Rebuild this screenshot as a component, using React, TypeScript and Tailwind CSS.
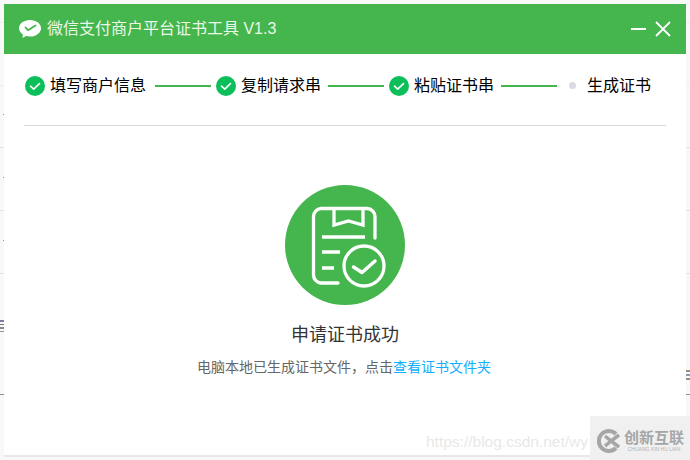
const cjk = "font-['Liberation_Sans','Noto_Sans_CJK_SC',sans-serif]";

function StepCheck() {
  return (
    <svg width="20" height="20" viewBox="0 0 20 20" className="shrink-0">
      <circle cx="10" cy="10" r="10" fill="#0dbf5b" />
      <path d="M5.5 10.2l3.2 3 5.8-5.6" fill="none" stroke="#fff" strokeWidth="1.6" strokeLinecap="round" strokeLinejoin="round" />
    </svg>
  );
}

function WeChatLogo() {
  return (
    <svg width="22" height="19" viewBox="0 0 22 19" className="shrink-0">
      <path d="M11 0C5 0 0 3.6 0 8.2c0 2.6 1.6 4.8 4 6.3L3.4 18l3.6-2c1.3.3 2.6.5 4 .5 6 0 11-3.7 11-8.3S17 0 11 0z" fill="#fff" />
      <path d="M6.5 7.5l2.5 2.7 7.5-4.7" fill="none" stroke="#45b54d" strokeWidth="1.8" strokeLinecap="round" strokeLinejoin="round" />
    </svg>
  );
}

function SuccessBadge() {
  return (
    <div className="w-[120px] h-[120px] rounded-full bg-[#45b54d] mt-[59px]">
      <svg width="120" height="120" viewBox="0 0 120 120" fill="none" stroke="#fff" strokeWidth="3.3" strokeLinecap="round">
        <path d="M90 53V32a8 8 0 0 0-8-8.500H36a8 8 0 0 0-7.500 8V90a8 8 0 0 0 7.500 8H53" />
        <path d="M49 24v16l14.500-4 14.500 4V24" strokeLinecap="butt" />
        <path d="M37 52h43M37 67h18M37 83h12" strokeLinecap="butt" />
        <circle cx="79" cy="81" r="20" />
        <path d="M68.500 82l8.500 5.500 13-11.500" strokeWidth="3.500" strokeLinejoin="round" />
      </svg>
    </div>
  );
}

function Watermark() {
  return (
    <div className="absolute right-0 bottom-0 w-[100px] h-[44px] bg-[#f0f0f0] flex items-center pl-[7px] gap-[4px]">
      <svg width="23" height="24" viewBox="0 0 23 24" fill="none" className="shrink-0 mt-[6px]">
        <path d="M19 5A10 10 0 1 0 19 19" stroke="#a6a6a6" strokeWidth="4" />
        <path d="M8 7l6 5-6 5M22 6l-8 6 8 6" stroke="#a6a6a6" strokeWidth="3.500" />
      </svg>
      <div className="flex flex-col items-center mt-[6px]">
        <span className={`${cjk} text-[15px] leading-[16px] font-bold text-[#a6a6a6]`}>创新互联</span>
        <span className="font-['Liberation_Sans',sans-serif] text-[5px] leading-[6px] whitespace-nowrap text-[#b0b0b0]">CHUANG XIN HU LIAN</span>
      </div>
    </div>
  );
}

const steps = ["填写商户信息", "复制请求串", "粘贴证书串"];

// rows of the page that sits behind the dialog, only their ends stick out
const backdropRows = [147, 210, 273];

export default function App() {
  return (
    <div className={`relative w-[690px] h-[460px] overflow-hidden bg-[#f8f8f8] p-[4px] pb-[3px] ${cjk}`}>
      {backdropRows.map((y) => (
        <div key={y} className="absolute left-0 right-0 h-[1px] bg-[#e4e4e4]" style={{ top: y }} />
      ))}
      <div className="absolute left-0 right-0 top-[22px] h-[1px] bg-[#eeeeee]" />
      <div className="absolute left-0 right-0 top-[85px] h-[1px] bg-[#eeeeee]" />
      <div className="absolute left-0 right-0 top-[394px] h-[1px] bg-[#8f8f8f]" />
      <div className="absolute left-[3px] top-[114px] w-[1px] h-[1px] bg-[#c08a50]" />
      <div className="absolute left-[3px] top-[177px] w-[1px] h-[1px] bg-[#c08a50]" />
      <div className="absolute left-[3px] top-[240px] w-[1px] h-[1px] bg-[#c08a50]" />
      <div className="absolute left-0 top-[320px] flex w-[4px] flex-col gap-[2px]">
        <div className="h-[2px] bg-[#7a7f99]" />
        <div className="h-[1px] bg-[#777]" />
        <div className="h-[2px] bg-[#8a8a8a]" />
        <div className="h-[1px] bg-[#999]" />
      </div>
      <div className="absolute right-0 top-[370px] flex w-[4px] flex-col gap-[2px]">
        <div className="h-[2px] bg-[#9a8f88]" />
        <div className="h-[2px] bg-[#8a9ab0]" />
        <div className="h-[2px] bg-[#9a8f88]" />
      </div>

      <div className="relative h-full bg-white flex flex-col border-b-2 border-[#e8e8e8]">
        <header className="h-[50px] shrink-0 bg-[#45b54d] flex items-center pl-[15px] pr-[15px] text-white">
          <WeChatLogo />
          <span className="ml-[6px] text-[16px] text-[#eaf7e6]">微信支付商户平台证书工具 V1.3</span>
          <div className="ml-auto flex items-center gap-[9px]">
            <div className="w-[15px] h-[2px] bg-white" />
            <svg width="16" height="16" viewBox="0 0 16 16" stroke="#fff" strokeWidth="1.8">
              <path d="M1 1l14 14M15 1L1 15" />
            </svg>
          </div>
        </header>

        <div className="mx-[20px] h-[72px] shrink-0 border-b border-[#d9d9d9] flex items-center pl-[1px] pb-[8px] text-[16px] text-black">
          {steps.map((label, i) => (
            <div key={label} className="flex items-center">
              <StepCheck />
              <span className={`whitespace-nowrap ${i === 0 ? "ml-[5px]" : "ml-[5px]"}`}>{label}</span>
              <div className={`h-[2px] w-[56px] bg-[#45b54d] mr-[5px] ${i === 0 ? "ml-[9px]" : "ml-[7px]"}`} />
            </div>
          ))}
          <div className="w-[7px] h-[7px] rounded-full bg-[#d8dae6] ml-[7px]" />
          <span className="ml-[11px] whitespace-nowrap">生成证书</span>
        </div>

        <main className="flex-1 flex flex-col items-center">
          <SuccessBadge />
          <h1 className="mt-[19px] text-[18px] leading-[22px] text-[#333]">申请证书成功</h1>
          <p className="mt-[11px] mr-[2px] text-[14px] leading-[20px] text-[#666]">
            电脑本地已生成证书文件，点击<a className="text-[#10aeff]">查看证书文件夹</a>
          </p>
        </main>
      </div>

      <span className="absolute left-[426px] top-[432px] whitespace-nowrap text-[15.5px] leading-[20px] text-[#e8e8e8] font-['Liberation_Sans',sans-serif]">https://blog.csdn.net/wy</span>
      <Watermark />
    </div>
  );
}
